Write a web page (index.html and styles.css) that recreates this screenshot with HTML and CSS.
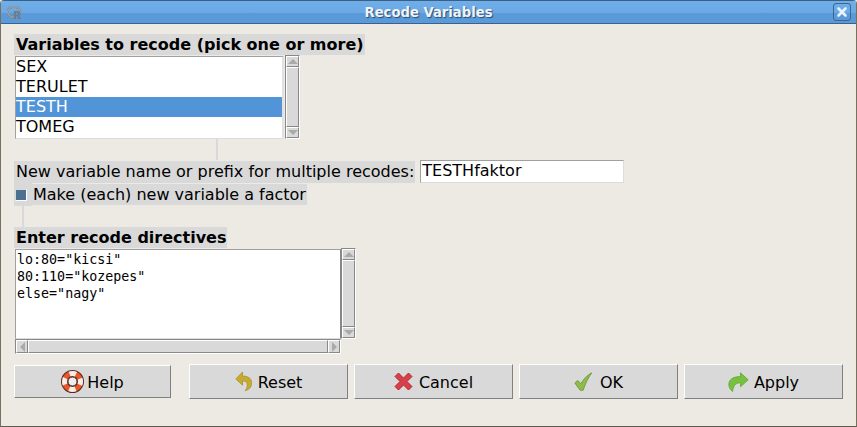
FILE: index.html
```html
<!DOCTYPE html>
<html lang="en">
<head>
<meta charset="utf-8">
<title>Recode Variables</title>
<link rel="stylesheet" href="styles.css">
</head>
<body>
<div class="window">
  <header class="titlebar">
    <svg class="r-logo" width="17" height="18" viewBox="0 0 17 18">
      <ellipse cx="7" cy="9" rx="6.3" ry="5.2" fill="none" stroke="#78838f" stroke-width="2.200"/>
      <ellipse cx="7" cy="9" rx="6.300" ry="5.200" fill="none" stroke="#b4bcc6" stroke-width=".8"/>
      <text x="6" y="16" class="r-letter">R</text>
    </svg>
    <span class="title">Recode Variables</span>
    <span class="close">
      <svg width="12" height="12" viewBox="0 0 12 12"><path d="M2.5 2.5l7 7M9.5 2.500l-7 7" stroke="#eaf2fa" stroke-width="2.600" stroke-linecap="round"/></svg>
    </span>
  </header>
  <main class="content">
    <div class="label bold top-label">Variables to recode (pick one or more)</div>
    <div class="list-row">
      <ul class="listbox">
        <li>SEX</li>
        <li>TERULET</li>
        <li class="selected">TESTH</li>
        <li>TOMEG</li>
      </ul>
      <div class="vscroll list-scroll">
        <span class="arrow-btn"><i class="tri up"></i></span>
        <span class="thumb"></span>
        <span class="arrow-btn"><i class="tri down"></i></span>
      </div>
    </div>
    <div class="connector conn-a"></div>
    <div class="name-row">
      <span class="label name-label">New variable name or prefix for multiple recodes:</span>
      <span class="entry">TESTHfaktor</span>
    </div>
    <div class="check-row">
      <span class="check-wrap"><i class="check"></i></span>
      <span class="label check-label">Make (each) new variable a factor</span>
    </div>
    <div class="connector conn-b"></div>
    <div class="label bold directive-label">Enter recode directives</div>
    <div class="text-row">
      <pre class="textbox">lo:80="kicsi"
80:110="kozepes"
else="nagy"</pre>
      <div class="vscroll text-scroll">
        <span class="arrow-btn"><i class="tri up"></i></span>
        <span class="thumb"></span>
        <span class="arrow-btn"><i class="tri down"></i></span>
      </div>
    </div>
    <div class="hscroll">
      <span class="arrow-btn-h"><i class="tri left"></i></span>
      <span class="thumb"></span>
      <span class="arrow-btn-h"><i class="tri right"></i></span>
    </div>
    <div class="buttons">
      <button class="btn btn-help">
        <svg width="23" height="23" viewBox="0 0 23 23">
          <circle cx="11.5" cy="11.5" r="8" fill="none" stroke="#5a2a20" stroke-width="7"/>
          <circle cx="11.5" cy="11.5" r="8" fill="none" stroke="#e8562a" stroke-width="5"/>
          <circle cx="11.5" cy="11.5" r="8" fill="none" stroke="#f6efe8" stroke-width="5" stroke-dasharray="6.5 6.07" stroke-dashoffset="3.2"/>
          <circle cx="11.5" cy="11.5" r="4.4" fill="#eee" stroke="#5a3a30" stroke-width="1"/>
        </svg>
        <span>Help</span>
      </button>
      <button class="btn btn-reset">
        <svg width="17" height="21" viewBox="0 0 17 21">
          <path d="M7.5 1L.8 8l6.7 6.2V10c3.4 0 5 1.4 4.8 4.600-.1 2-1 3.700-2.300 5.200 4-1 6.600-3.800 6.700-7.800C16.800 7.600 13 5 7.500 5z" fill="#c7ab30" stroke="#a08a25" stroke-width=".7"/>
        </svg>
        <span>Reset</span>
      </button>
      <button class="btn btn-cancel">
        <svg width="19" height="19" viewBox="0 0 19 19">
          <path d="M1 4.500L4.500 1l5 5 5-5L18 4.500l-5 5 5 5-3.500 3.500-5-5-5 5L1 14.500l5-5z" fill="#d6404a" stroke="#b8262e" stroke-width="1" stroke-linejoin="round"/>
        </svg>
        <span>Cancel</span>
      </button>
      <button class="btn btn-ok">
        <svg width="19" height="19" viewBox="0 0 19 19">
          <path d="M.8 11l3-2.600 3 3.300C9.500 7.500 12.500 3.500 17.800.8c-3 4.200-6.300 10.200-8.700 17.500H6.200z" fill="#8fbb4c" stroke="#6a9230" stroke-width=".8" stroke-linejoin="round"/>
        </svg>
        <span>OK</span>
      </button>
      <button class="btn btn-apply">
        <svg width="21" height="20" viewBox="0 0 21 20">
          <path d="M12.500.8l7.700 7-7.700 7V10.800C8.500 10.800 5.500 12.500 4.500 19.500 1.500 17 .2 14 1 10.800 2 6.500 6.500 4.600 12.500 4.600z" fill="#74c23e" stroke="#5c9e2c" stroke-width=".7"/>
        </svg>
        <span>Apply</span>
      </button>
    </div>
  </main>
</div>
</body>
</html>
```

FILE: styles.css
```css
* { box-sizing: border-box; }
html, body { margin: 0; padding: 0; }
body {
  width: 857px;
  height: 427px;
  overflow: hidden;
  background: #edeae4;
  font-family: "DejaVu Sans", sans-serif;
  font-size: 16px;
  color: #000;
}
.window {
  width: 857px;
  height: 427px;
  display: flex;
  flex-direction: column;
  background: #edeae4;
  border-left: 1px solid #77705f;
  border-right: 1px solid #77705f;
  border-bottom: 1px solid #5f5a4e;
  border-radius: 4px 4px 0 0;
  overflow: hidden;
}
.titlebar {
  height: 24px;
  flex: none;
  display: flex;
  align-items: center;
  margin: 0 -1px;
  padding: 0 6px 0 7px;
  background: linear-gradient(#70aee8 0, #6aa9e6 12px, #5a9ad9 12px, #5a9ad8 100%);
  border-top: 1px solid #3c5f88;
  border-bottom: 1px solid #3b628f;
}
.r-logo { flex: none; }
.r-letter {
  font-family: "DejaVu Sans", sans-serif;
  font-size: 11px;
  font-weight: bold;
  fill: #6f7a88;
}
.title {
  flex: 1;
  text-align: center;
  font-size: 13.2px;
  font-weight: bold;
  color: #eef4fb;
  text-shadow: 1px 1px 1px #2d4a6e;
}
.close {
  width: 18px;
  height: 18px;
  flex: none;
  display: flex;
  align-items: center;
  justify-content: center;
  border: 1px solid #3c6590;
  border-radius: 3px;
}
.content {
  flex: 1;
  display: flex;
  flex-direction: column;
  align-items: flex-start;
  padding: 10px 0 0 13px;
}
.label {
  background: #d9d9d9;
  line-height: 21px;
  padding: 0 1px 0 2px;
  white-space: nowrap;
}
.bold { font-weight: bold; }
.top-label { height: 21px; }
.list-row {
  display: flex;
  margin: 0 0 0 1px;
}
.listbox {
  list-style: none;
  margin: 1px 0 0;
  padding: 0;
  width: 269px;
  height: 83px;
  background: #fff;
  border: 1px solid #a0a0a0;
  border-bottom-color: #dcdcdc;
  border-right: 2px solid #e2e2e2;
}
.listbox li {
  height: 20px;
  line-height: 19px;
}
.listbox li.selected {
  background: #5294d8;
  color: #fff;
}
.vscroll {
  display: flex;
  flex-direction: column;
  width: 15px;
  margin-left: 1px;
  background: #d9d9d9;
  border: 1px solid;
  border-color: #888 #fff #fff #888;
}
.list-scroll { height: 84px; }
.text-scroll { height: 91px; margin-left: 0; }
.arrow-btn {
  flex: none;
  height: 11px;
  display: flex;
  align-items: center;
  justify-content: center;
  background: #d9d9d9;
  border: 1px solid;
  border-color: #fff #888 #888 #fff;
}
.arrow-btn-h {
  flex: none;
  width: 12px;
  display: flex;
  align-items: center;
  justify-content: center;
  background: #d9d9d9;
  border: 1px solid;
  border-color: #fff #888 #888 #fff;
}
.thumb {
  flex: 1;
  background: #d9d9d9;
  border: 1px solid;
  border-color: #fff #888 #888 #fff;
}
.tri { display: block; width: 0; height: 0; border: 5px solid transparent; }
.tri.up { border-top: 0; border-bottom-color: #aaa; }
.tri.down { border-bottom: 0; border-top-color: #aaa; }
.tri.left { border-left: 0; border-right-color: #aaa; }
.tri.right { border-right: 0; border-left-color: #aaa; }
.connector { background: #d9d9d9; width: 2px; height: 21px; }
.conn-a { margin: 0 0 1px 202px; }
.conn-b { margin-left: 8px; }
.name-row {
  display: flex;
  align-items: flex-start;
  height: 22px;
}
.name-row .label { height: 22px; line-height: 21px; }
.entry {
  width: 204px;
  height: 23px;
  line-height: 20px;
  margin: -1px 0 0 5px;
  padding-left: 1px;
  background: #fff;
  border: 1px solid #dcdcdc;
  border-top-color: #a0a0a0;
  border-left-color: #a0a0a0;
}
.check-row {
  display: flex;
  align-items: center;
  height: 23px;
}
.check-wrap {
  width: 18px;
  height: 23px;
  flex: none;
  display: flex;
  align-items: center;
  padding-left: 1px;
  background: #d9d9d9;
}
.check {
  display: block;
  width: 12px;
  height: 12px;
  background: #4f6f90;
  border: 1px solid;
  border-color: #d9d9d9 #fff #fff #d9d9d9;
}
.check-label { height: 21px; line-height: 21px; padding: 0 1px; }
.directive-label { height: 21px; }
.text-row {
  display: flex;
  margin-left: 1px;
}
.textbox {
  margin: 1px 0 0;
  width: 326px;
  height: 90px;
  padding: 1px;
  background: #fff;
  border: 1px solid #a0a0a0;
  border-bottom-color: #dcdcdc;
  border-right-color: #888;
  font-family: "DejaVu Sans Mono", monospace;
  font-size: 13.33px;
  line-height: 17px;
}
.hscroll {
  display: flex;
  width: 326px;
  height: 15px;
  margin-left: 1px;
  background: #d9d9d9;
  border: 1px solid;
  border-color: #888 #fff #fff #888;
}
.buttons {
  display: flex;
  align-items: center;
  margin-top: 10px;
  height: 35px;
}
.btn {
  display: flex;
  align-items: center;
  justify-content: center;
  padding: 0;
  height: 35px;
  width: 159px;
  margin-left: 6px;
  background: #d9d9d9;
  border: 1px solid;
  border-color: #fff #7f7f7f #7f7f7f #fff;
  font-family: "DejaVu Sans", sans-serif;
  font-size: 16px;
  color: #000;
}
.btn span { padding-top: 2px; }
.btn svg { flex: none; }
.btn-help { width: 157px; height: 33px; margin-left: 0; gap: 3px; }
.btn-reset { margin-left: 18px; gap: 6px; }
.btn-cancel { gap: 6px; }
.btn-ok { gap: 7px; }
.btn-apply { gap: 5px; }
```
